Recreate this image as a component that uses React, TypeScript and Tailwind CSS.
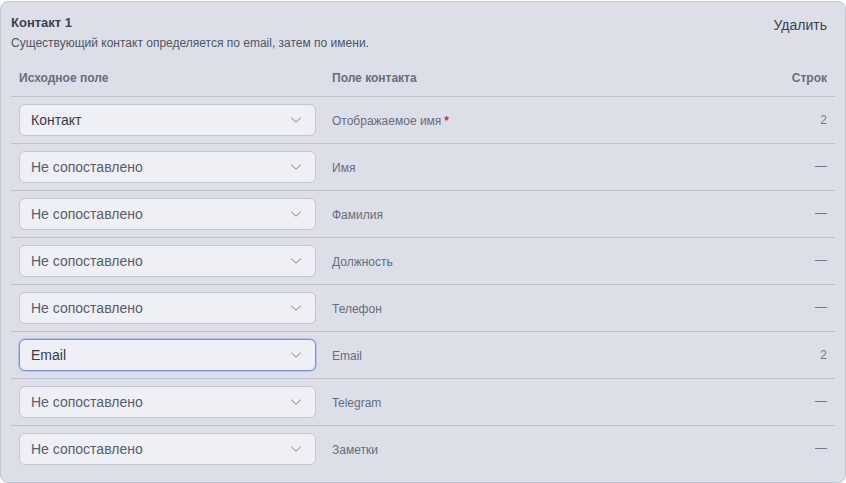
const rows = [
  { source: "Контакт", field: "Отображаемое имя", required: true, count: "2" },
  { source: "Не сопоставлено", field: "Имя", count: "—" },
  { source: "Не сопоставлено", field: "Фамилия", count: "—" },
  { source: "Не сопоставлено", field: "Должность", count: "—" },
  { source: "Не сопоставлено", field: "Телефон", count: "—" },
  { source: "Email", field: "Email", count: "2", focused: true },
  { source: "Не сопоставлено", field: "Telegram", count: "—" },
  { source: "Не сопоставлено", field: "Заметки", count: "—" },
];

const Chevron = () => (
  <svg width="12" height="8" viewBox="0 0 12 8" fill="none">
    <path
      d="M1.5 2L6 6.2L10.5 2"
      stroke="#7d8290"
      strokeWidth="1"
      strokeLinecap="round"
      strokeLinejoin="round"
    />
  </svg>
);

const App = () => {
  return (
    <div className="h-[483px] w-[846px] bg-white font-['Liberation_Sans',Arial,sans-serif]">
      <div className="mt-px h-[482px] rounded-lg border border-[#c3c7d2] bg-[#dcdfe8] px-[10px] pt-[11px]">
        <div className="flex items-start justify-between">
          <div>
            <div className="text-[13px] font-bold leading-5 text-[#3c4152]">
              Контакт 1
            </div>
            <div className="mt-[2px] text-xs leading-4 text-[#4e5566]">
              Существующий контакт определяется по email, затем по имени.
            </div>
          </div>
          <button className="mr-[8px] mt-[2px] text-sm leading-5 text-[#3c4152]">
            Удалить
          </button>
        </div>

        <div className="mt-[9px]">
          <div className="grid grid-cols-[313px_1fr_120px] border-b border-[#bfc3cd] text-xs font-bold leading-4 text-[#686e7e]">
            <div className="px-2 py-[10px]">Исходное поле</div>
            <div className="px-2 py-[10px]">Поле контакта</div>
            <div className="px-2 py-[10px] text-right">Строк</div>
          </div>
          {rows.map((r, i) => (
            <div
              key={i}
              className={`grid grid-cols-[313px_1fr_120px] items-center ${
                i < rows.length - 1 ? "border-b border-[#bfc3cd]" : ""
              }`}
            >
              <div className="px-2 py-[7px]">
                <div
                  className={
                    r.focused
                      ? "flex h-8 items-center justify-between rounded-md border border-[#7d8fe0] bg-[#eff0f5] pl-[11px] pr-[13px] shadow-[0_0_0_1px_rgba(125,143,224,0.35)]"
                      : "flex h-8 items-center justify-between rounded-md border border-[#c4c7d1] bg-[#eff0f5] pl-[11px] pr-[13px]"
                  }
                >
                  <span
                    className={
                      r.source === "Не сопоставлено"
                        ? "text-sm text-[#575d6d]"
                        : "text-sm text-[#363b4b]"
                    }
                  >
                    {r.source}
                  </span>
                  <Chevron />
                </div>
              </div>
              <div className="px-2 pt-[2px] text-xs text-[#676d7c]">
                {r.field}
                {r.required && <span className="ml-[3px] font-bold text-[#d42a3c]">*</span>}
              </div>
              <div
                className={`px-2 text-right text-xs text-[#767b89] ${
                  r.count === "—" ? "-mt-[3px]" : ""
                }`}
              >
                {r.count}
              </div>
            </div>
          ))}
        </div>
      </div>
    </div>
  );
};

export default App;
